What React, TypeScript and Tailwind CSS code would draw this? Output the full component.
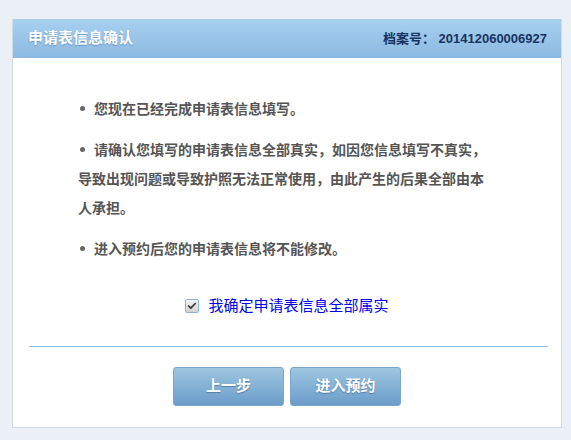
import { Check } from "lucide-react";

const notes = [
    "您现在已经完成申请表信息填写。",
    "请确认您填写的申请表信息全部真实，如因您信息填写不真实，导致出现问题或导致护照无法正常使用，由此产生的后果全部由本人承担。",
    "进入预约后您的申请表信息将不能修改。",
];

export default function App() {
    return (
        <div className="min-h-screen w-full bg-[#eaf0f5] pt-[19px] font-['Liberation_Sans','Noto_Sans_CJK_SC',sans-serif]">
            <div className="ml-[12px] w-[550px] border-x border-b border-[#d3dce5] bg-white">
                {/* header */}
                <div className="flex h-[39px] items-center justify-between bg-linear-to-b from-[#a7d0ef] to-[#8cb9e2] pl-[15px] pr-[14px]">
                    <span className="text-[15px] font-bold text-white [text-shadow:0_1px_1px_rgba(60,100,150,0.5)]">申请表信息确认</span>
                    <span className="text-[13px] font-bold text-[#17335f]">
                        档案号：&nbsp;201412060006927
                    </span>
                </div>

                {/* notes */}
                <div className="ml-[65px] w-[412px] pt-[37px] space-y-[12px]">
                    {notes.map((note, index) => (
                        <p key={index} className="text-[14px] leading-[29px] font-bold text-[#555]">
                            <span className="inline-block h-[29px] w-[16px] align-top">
                                <span className="mt-[11px] ml-[2px] block h-[5px] w-[5px] rounded-full bg-[#666]" />
                            </span>
                            {note}
                        </p>
                    ))}
                </div>

                {/* confirm */}
                <div className="mt-[32px] flex h-[20px] items-center justify-center gap-[9px]">
                    <span className="flex h-[14px] w-[14px] items-center justify-center rounded-[2px] border border-[#8fb2dc] bg-linear-to-b from-[#f4f4f4] to-[#d2d2d2]">
                        <Check className="h-[10px] w-[10px] text-[#333]" strokeWidth={4} />
                    </span>
                    <span className="text-[15px] text-[#0000ee]">我确定申请表信息全部属实</span>
                </div>

                <div className="mt-[30px] ml-[16px] mr-[13px] h-px bg-[#90bce4]" />

                {/* actions */}
                <div className="flex justify-center gap-[6px] pt-[20px] pb-[21px]">
                    <button className="h-[39px] w-[111px] rounded-[3px] border border-[#7aa6cc] bg-linear-to-b from-[#9ec6e0] to-[#6b9cc9] text-[15px] font-bold text-white [text-shadow:0_1px_1px_rgba(40,80,130,0.5)]">
                        上一步
                    </button>
                    <button className="h-[39px] w-[111px] rounded-[3px] border border-[#7aa6cc] bg-linear-to-b from-[#9ec6e0] to-[#6b9cc9] text-[15px] font-bold text-white [text-shadow:0_1px_1px_rgba(40,80,130,0.5)]">
                        进入预约
                    </button>
                </div>
            </div>
        </div>
    );
}
